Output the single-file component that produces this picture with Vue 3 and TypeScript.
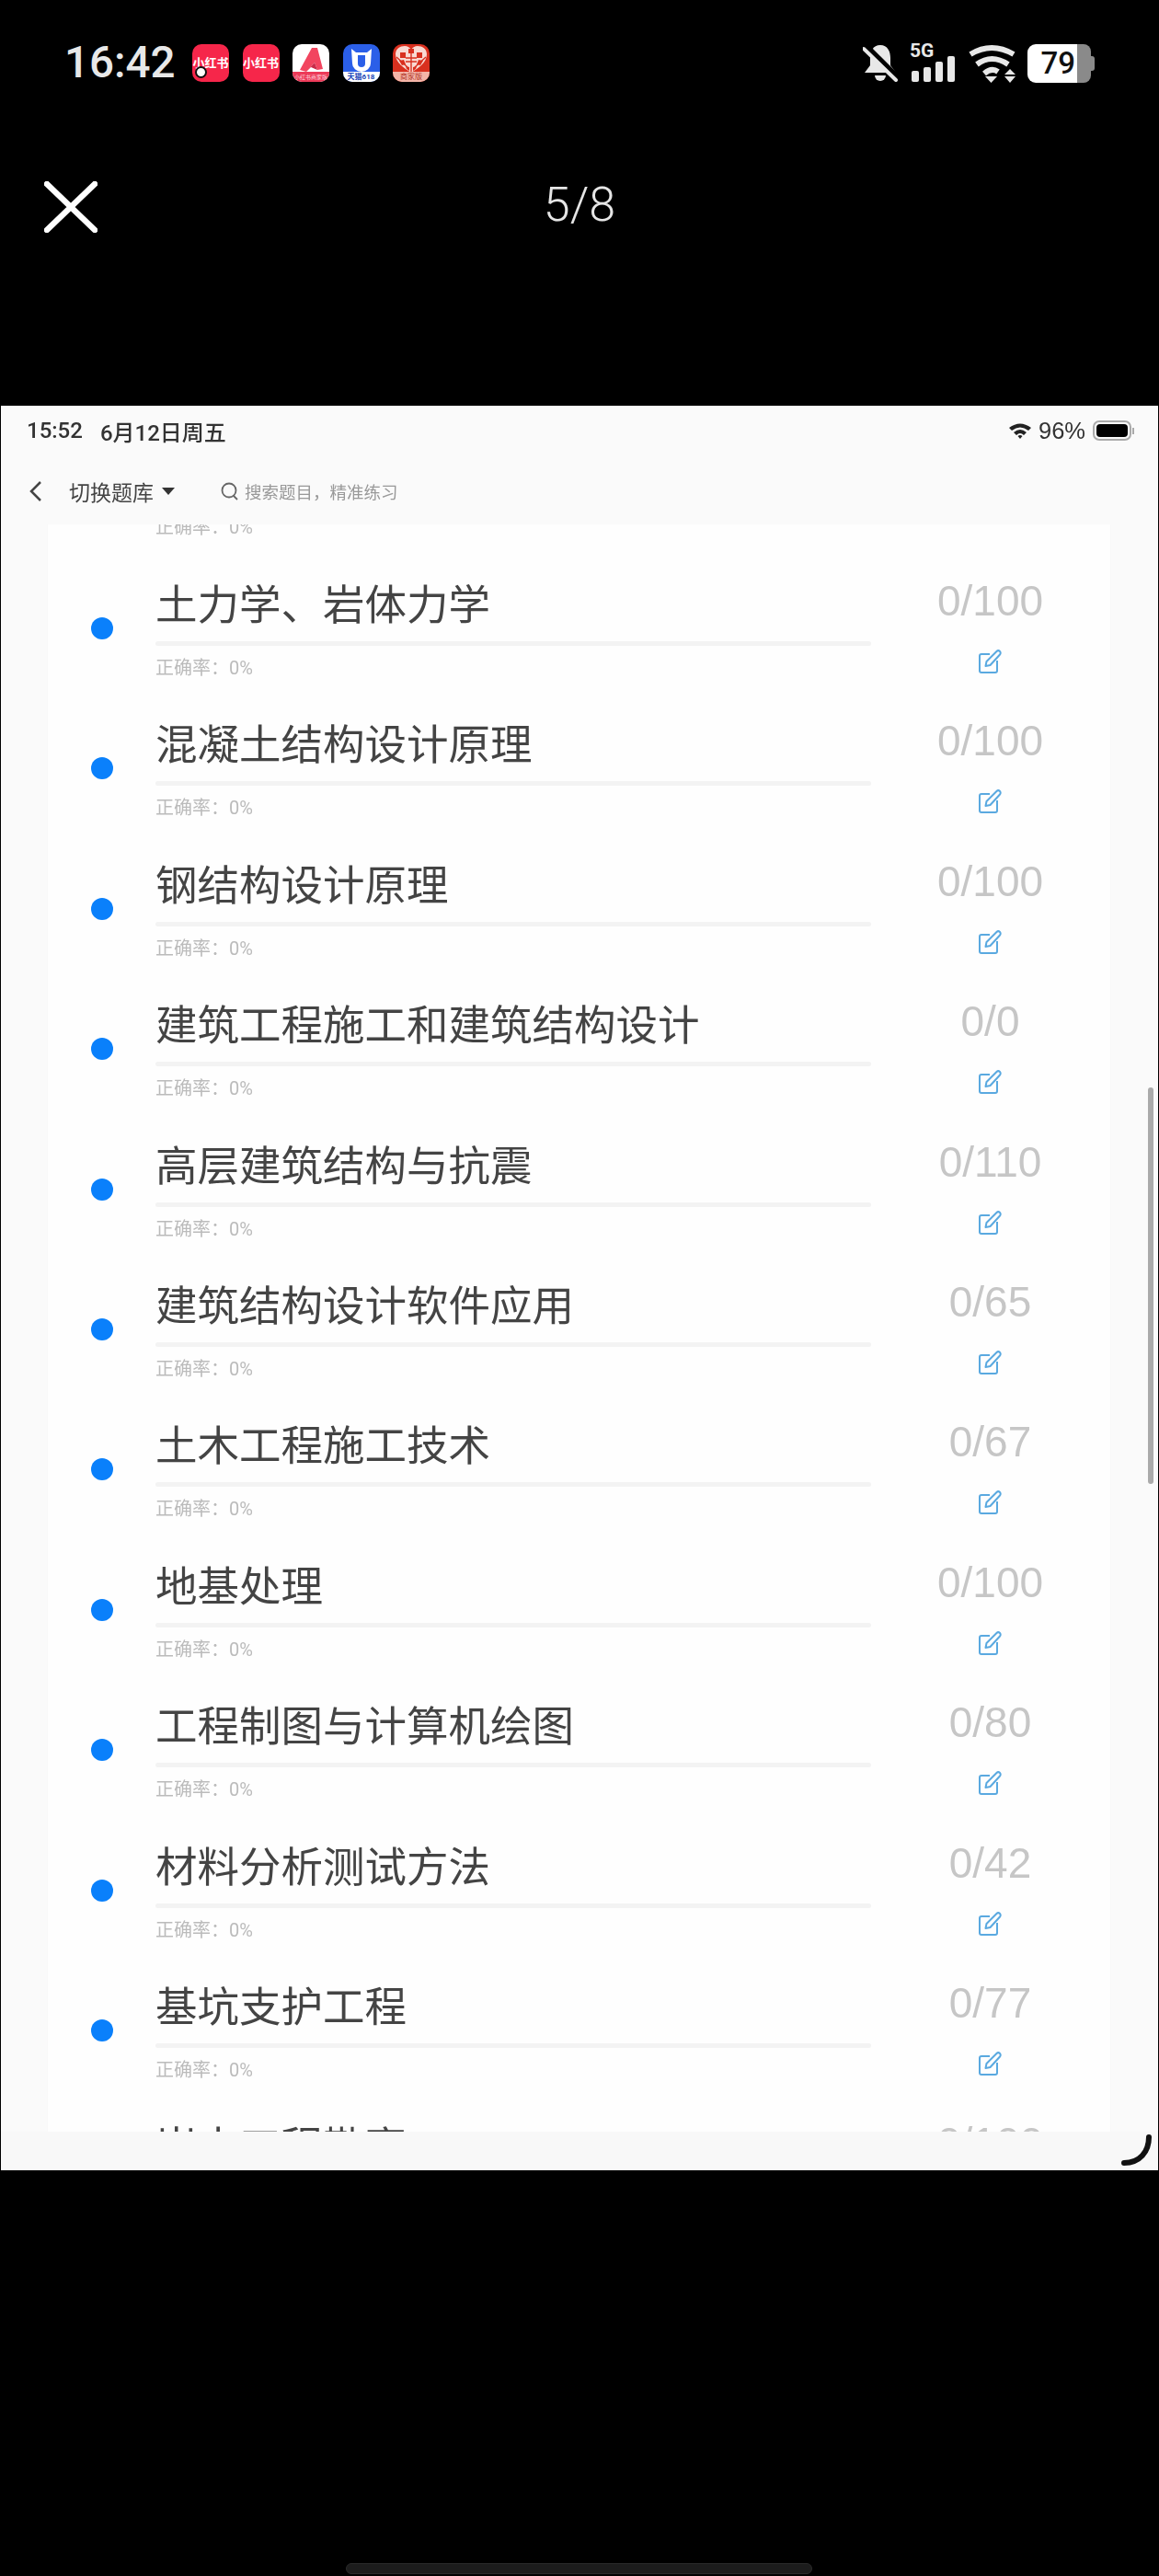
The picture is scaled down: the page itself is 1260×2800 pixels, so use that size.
<script setup lang="ts">
// 题库列表,截图里的滚动位置由 card 的负 margin 控制
interface Subject {
  name: string
  done: number
  total: number
}

const subjects: Subject[] = [
  { name: '土力学、岩体力学', done: 0, total: 100 },
  { name: '混凝土结构设计原理', done: 0, total: 100 },
  { name: '钢结构设计原理', done: 0, total: 100 },
  { name: '建筑工程施工和建筑结构设计', done: 0, total: 0 },
  { name: '高层建筑结构与抗震', done: 0, total: 110 },
  { name: '建筑结构设计软件应用', done: 0, total: 65 },
  { name: '土木工程施工技术', done: 0, total: 67 },
  { name: '地基处理', done: 0, total: 100 },
  { name: '工程制图与计算机绘图', done: 0, total: 80 },
  { name: '材料分析测试方法', done: 0, total: 42 },
  { name: '基坑支护工程', done: 0, total: 77 },
  { name: '岩土工程勘察', done: 0, total: 100 },
]

const heartCells = [
  'M8 9h6v6h-6z',
  'M26 9h6v6h-6z',
  'M17 5h6v5h-6z',
  'M7 18l5-1 2 5-4 1z',
  'M33 18l-5-1-2 5 4 1z',
  'M14 24l4 1v4l-3-2z',
  'M26 24l-4 1v4l3-2z',
]
</script>

<template>
  <div class="phone">
    <!-- 手机状态栏 -->
    <div class="status">
      <span class="clock">16:42</span>
      <div class="apps">
        <div class="app app-red">
          <span class="app-name">小红书</span>
          <i class="app-badge"></i>
        </div>
        <div class="app app-red"><span class="app-name">小红书</span></div>
        <div class="app app-white">
          <svg class="app-art" viewBox="0 0 40 41">
            <path d="M21 4 27 4 33 27 27 28 24 20 15 30 8 28z" fill="#f2455f" />
            <path d="M15 30 24 20 27 28 20 25z" fill="#c92b48" />
          </svg>
          <span class="app-band band-red">小红书商家版</span>
        </div>
        <div class="app app-blue">
          <svg class="app-art" viewBox="0 0 40 41">
            <path d="M9 5 14 9H26L31 5 30 21A10 9 0 0 1 10 21z" fill="#fff" />
            <path d="M16 12H24V21A4 4 0 0 1 16 21z" fill="#2b5fe8" />
          </svg>
          <span class="app-band band-white">天猫618</span>
        </div>
        <div class="app app-pdd">
          <svg class="app-art" viewBox="0 0 40 41">
            <path d="M20 31C12 26 3 20 3 11 3 5 8 2 13 2 16 2 19 4 20 6 21 4 24 2 27 2 32 2 37 5 37 11 37 20 28 26 20 31z" fill="#f9d9d2" />
            <path v-for="d in heartCells" :key="d" :d="d" fill="#d9301f" />
            <path d="M20 10V30M14 15H26M14 19H26M4 14 16 25M36 14 24 25" stroke="#d9301f" stroke-width="1.400" fill="none" />
          </svg>
          <span class="app-band band-pink">商家版</span>
        </div>
      </div>
      <div class="indicators">
        <svg class="ic-bell" width="38" height="41" viewBox="0 0 38 41">
          <path d="M19 1C11 1 8 8 8 15V23L2 31H36L30 23V15C30 8 27 1 19 1Z" fill="#e8e8e8" />
          <path d="M13 34A6 6 0 0 0 25 34Z" fill="#e8e8e8" />
          <path d="M3 2 38 37" stroke="#000" stroke-width="7" />
          <path d="M1 5 36 39" stroke="#e8e8e8" stroke-width="4" stroke-linecap="round" />
        </svg>
        <div class="signal">
          <span class="net">5G</span>
          <div class="bars">
            <i class="bar bar-1"></i>
            <i class="bar bar-2"></i>
            <i class="bar bar-3"></i>
            <i class="bar bar-4"></i>
          </div>
        </div>
        <svg class="ic-wifi" width="54" height="42" viewBox="0 0 54 42">
          <g fill="none" stroke="#e8e8e8" stroke-width="6">
            <path d="M3 11Q26-3 50 11" />
            <path d="M10 22Q26 10 44 22" />
            <path d="M18 32Q26 25 33 30" />
          </g>
          <path d="M19 35H32L25.500 42zM40 33H52L46 27zM40 35H52L46 42z" fill="#e8e8e8" />
        </svg>
        <div class="battery">
          <div class="battery-fill"><span>79</span></div>
          <div class="battery-rest"></div>
          <i class="battery-nub"></i>
        </div>
      </div>
    </div>

    <!-- 图片预览顶栏 -->
    <div class="viewer-bar">
      <svg class="ic-close" width="58" height="56" viewBox="0 0 58 56">
        <path d="M3 3 55 53M55 3 3 53" stroke="#fff" stroke-width="6.500" stroke-linecap="round" />
      </svg>
      <span class="page-no">5/8</span>
    </div>

    <!-- 截图内容 -->
    <div class="shot">
      <div class="shot-head">
        <div class="pad-status">
          <span class="pad-time">15:52</span>
          <span class="pad-date">6月12日周五</span>
          <svg class="pad-wifi" width="26" height="20" viewBox="0 0 26 20">
            <path d="M1 7Q13-2 25 7L22 10Q13 3 4 10zM6 12Q13 6 20 12L17 15Q13 11 9 15zM10.500 16Q13 14 15.500 16L13 19z" fill="#222" />
          </svg>
          <span class="pad-batt-text">96%</span>
          <div class="pad-batt"><i></i></div>
          <i class="pad-nub"></i>
        </div>
        <div class="nav">
          <svg class="nav-back" width="14" height="24" viewBox="0 0 14 24">
            <path d="M12 2 2 12 12 22" fill="none" stroke="#444" stroke-width="2.500" />
          </svg>
          <span class="nav-switch">切换题库</span>
          <i class="nav-caret"></i>
          <svg class="nav-search" width="21" height="20" viewBox="0 0 21 20">
            <circle cx="10" cy="9" r="7.500" fill="none" stroke="#666" stroke-width="1.800" />
            <path d="M15 15 19 19" stroke="#666" stroke-width="1.800" />
          </svg>
          <span class="nav-hint">搜索题目&#xFF0C;精准练习</span>
        </div>
      </div>

      <div class="scroller">
        <div class="card">
          <!-- 上一行只露出正确率 -->
          <div class="row-stub">
            <div class="row-rate">正确率&#xFF1A;0%</div>
          </div>
          <div v-for="item in subjects" :key="item.name" class="row">
            <i class="dot"></i>
            <div class="row-main">
              <div class="row-title">{{ item.name }}</div>
              <div class="row-progress"></div>
              <div class="row-rate">正确率&#xFF1A;0%</div>
            </div>
            <div class="row-side">
              <div class="row-count">{{ item.done }}/{{ item.total }}</div>
              <svg class="ic-edit" width="25" height="26" viewBox="0 0 25 26">
                <path d="M12 5H3A2 2 0 0 0 1 7V23A2 2 0 0 0 3 25H18A2 2 0 0 0 20 23V12" fill="none" stroke="#5aa9e0" stroke-width="2" />
                <path d="M7.500 18 8.500 13 19.500 2A2.300 2.300 0 0 1 23 5.500L12.500 17Z" fill="none" stroke="#5aa9e0" stroke-width="2" stroke-linejoin="round" />
              </svg>
            </div>
          </div>
        </div>
        <i class="scrollbar"></i>
      </div>

      <div class="shot-foot">
        <svg width="34" height="36" viewBox="0 0 34 36">
          <path d="M30 4C30 20 20 32 3 32" fill="none" stroke="#111" stroke-width="6" stroke-linecap="round" />
        </svg>
      </div>
    </div>

    <div class="home-bar"></div>
  </div>
</template>

<style scoped>
.phone {
  width: 1260px;
  height: 2800px;
  background: #000;
  overflow: hidden;
  display: flex;
  flex-direction: column;
  font-family: Roboto, 'Noto Sans CJK SC', sans-serif;
}

/* ========== 状态栏 ========== */
.status {
  height: 41px;
  margin-top: 48px;
  padding-left: 70px;
  display: flex;
  align-items: center;
  color: #e8e8e8;
}
.clock {
  width: 139px;
  font-size: 47.500px;
  font-weight: 500;
  line-height: 41px;
}
.apps {
  display: flex;
  gap: 14.500px;
}
.app {
  width: 40px;
  height: 41px;
  border-radius: 10px;
  overflow: hidden;
  display: flex;
  flex-direction: column;
  align-items: center;
  justify-content: center;
  position: relative;
}
.app-red {
  background: #f6264a;
}
.app-white {
  background: #fff;
}
.app-blue {
  background: #2b5fe8;
}
.app-pdd {
  background: #d9301f;
}
.app-name {
  font-size: 13px;
  font-weight: 700;
  color: #fff;
  line-height: 16px;
  white-space: nowrap;
}
.app-badge {
  position: absolute;
  left: 3px;
  bottom: 4px;
  width: 9px;
  height: 9px;
  border-radius: 50%;
  background: #fff;
  border: 2px solid #111;
}
.app-art {
  position: absolute;
  left: 0;
  top: 0;
  width: 40px;
  height: 41px;
}
.app-band {
  position: absolute;
  left: 0;
  right: 0;
  bottom: 0;
  height: 11px;
  font-size: 8px;
  line-height: 11px;
  text-align: center;
  white-space: nowrap;
  overflow: hidden;
}
.band-red {
  background: #ec3a58;
  color: #ffd5dc;
  font-size: 6px;
}
.band-white {
  background: #fff;
  color: #1c46b8;
  font-weight: 700;
}
.band-pink {
  background: #f4b5a8;
  color: #b0321f;
}
.indicators {
  margin-left: auto;
  display: flex;
  align-items: center;
  height: 41px;
}
.signal {
  margin-left: 13px;
  width: 50px;
  height: 41px;
  position: relative;
}
.net {
  position: absolute;
  left: 0;
  top: -1px;
  font-size: 21px;
  font-weight: 700;
  line-height: 17px;
}
.bars {
  position: absolute;
  left: 2px;
  bottom: 0;
  display: flex;
  align-items: flex-end;
  gap: 5px;
}
.bar {
  width: 8px;
  border-radius: 2px;
  background: #e8e8e8;
}
.bar-1 {
  height: 12px;
}
.bar-2 {
  height: 16px;
}
.bar-3 {
  height: 22px;
}
.bar-4 {
  height: 28px;
}
.ic-wifi {
  margin-left: 13px;
}
.battery {
  margin-left: 11px;
  margin-right: 70px;
  display: flex;
  align-items: center;
  height: 42px;
  position: relative;
}
.battery-fill {
  width: 54px;
  height: 42px;
  background: #fff;
  border-radius: 9px 0 0 9px;
  color: #111;
  font-size: 33px;
  font-weight: 500;
  line-height: 42px;
  text-align: right;
  padding-right: 2px;
  box-sizing: border-box;
}
.battery-rest {
  width: 15px;
  height: 42px;
  background: #8a8a8a;
  border-radius: 0 8px 8px 0;
}
.battery-nub {
  width: 4px;
  height: 16px;
  background: #8a8a8a;
  border-radius: 0 3px 3px 0;
}

/* ========== 预览顶栏 ========== */
.viewer-bar {
  height: 56px;
  margin-top: 108px;
  padding-left: 48px;
  position: relative;
  display: flex;
  align-items: center;
}
.page-no {
  position: absolute;
  left: 0;
  right: 0;
  top: 0;
  text-align: center;
  color: #e6e6e6;
  font-size: 52px;
  font-weight: 300;
  line-height: 52px;
}

/* ========== 截图 ========== */
.shot {
  margin: 188px 1px 0;
  width: 1258px;
  height: 1918px;
  flex: none;
  background: #fafafa;
  display: flex;
  flex-direction: column;
  filter: blur(0.5px);
}
.shot-head {
  height: 129px;
  flex: none;
}
.pad-status {
  height: 54px;
  padding: 0 26px 0 28px;
  display: flex;
  align-items: center;
  color: #333;
  font-size: 24px;
  font-weight: 500;
}
.pad-date {
  margin-left: 19px;
}
.pad-wifi {
  margin-left: auto;
}
.pad-batt-text {
  margin-left: 7px;
  font-family: 'Liberation Sans', sans-serif;
  font-size: 25.500px;
  font-weight: 400;
}
.pad-batt {
  margin-left: 8px;
  width: 42px;
  height: 22px;
  box-sizing: border-box;
  border: 2px solid #aaa;
  border-radius: 7px;
  padding: 2px;
  display: flex;
}
.pad-batt i {
  flex: 1;
  background: #000;
  border-radius: 4px;
}
.pad-nub {
  margin-left: 1px;
  width: 2px;
  height: 7px;
  background: #aaa;
}
.nav {
  height: 75px;
  padding: 2px 0 0 31px;
  box-sizing: border-box;
  display: flex;
  align-items: center;
}
.nav-switch {
  margin-left: 29px;
  font-size: 23px;
  color: #444;
}
.nav-caret {
  margin-left: 9px;
  width: 0;
  height: 0;
  border-left: 7px solid transparent;
  border-right: 7px solid transparent;
  border-top: 8px solid #333;
}
.nav-search {
  margin-left: 49px;
}
.nav-hint {
  margin-left: 6px;
  font-size: 18.500px;
  color: #999;
}
.scroller {
  flex: 1;
  min-height: 0;
  overflow: hidden;
  position: relative;
}
.card {
  margin: -9px 0 0 51px;
  width: 1155px;
  background: #fefefe;
  box-shadow: 0 0 2px rgba(0, 0, 0, 0.03);
}
.row-stub {
  height: 61px;
  padding-left: 117px;
}
.row-stub .row-rate {
  margin-top: 0;
}
.row {
  height: 152.400px;
  box-sizing: border-box;
  padding: 7px 0 0 47px;
  display: grid;
  grid-template-columns: 70px 778px 259px;
}
.dot {
  display: block;
  width: 24px;
  height: 24px;
  margin-top: 42px;
  border-radius: 50%;
  background: #0a80fb;
}
.row-title {
  font-size: 45.500px;
  line-height: 60px;
  color: #444;
  white-space: nowrap;
}
.row-progress {
  margin-top: 8px;
  height: 5px;
  background: #f3f3f3;
  border-radius: 3px;
}
.row-rate {
  margin-top: 12px;
  font-size: 20px;
  line-height: 24px;
  color: #bbb;
}
.row-side {
  display: flex;
  flex-direction: column;
  align-items: center;
}
.row-count {
  margin-top: -4px;
  font-family: 'Liberation Sans', sans-serif;
  font-size: 46px;
  line-height: 56px;
  color: #c6c6c6;
}
.ic-edit {
  display: block;
  margin-top: 25px;
}
.scrollbar {
  position: absolute;
  left: 1247px;
  top: 612px;
  width: 6px;
  height: 431px;
  border-radius: 3px;
  background: #aaa;
}
.shot-foot {
  height: 42px;
  flex: none;
  background: #f8f8f8;
  display: flex;
  justify-content: flex-end;
  align-items: center;
  padding: 0 6px 3px 0;
  box-sizing: border-box;
}
.home-bar {
  width: 507px;
  height: 12px;
  margin: 427px 0 0 376px;
  box-sizing: border-box;
  background: #1c1c1c;
  border: 1px solid #2a2a2a;
  border-radius: 6px;
  flex: none;
}
</style>

<style>
body {
  background: #000;
}
</style>
